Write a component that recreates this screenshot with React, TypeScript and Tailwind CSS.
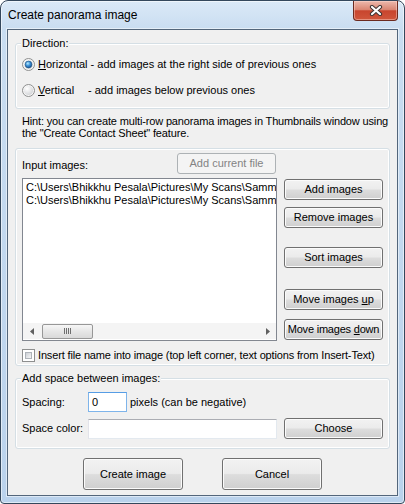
import React from "react";

const btn =
  "flex h-[21px] w-[99px] items-center justify-center rounded-[3px] border border-[#707070] bg-[linear-gradient(#f2f2f2,#ebebeb_48%,#dddddd_52%,#cfcfcf)] text-[11px] leading-none text-black shadow-[inset_0_0_0_1px_#fbfbfb] whitespace-nowrap";

const group =
  "relative mx-[7px] rounded-[3px] border border-[#d5dfe5] shadow-[inset_0_0_0_1px_#ffffff]";

function Radio({ checked }: { checked?: boolean }) {
  return (
    <svg width="13" height="13" viewBox="0 0 13 13" className="shrink-0">
      <defs>
        <radialGradient id="radioOff" cx="0.35" cy="0.3" r="0.8">
          <stop offset="0" stopColor="#ffffff" />
          <stop offset="1" stopColor="#cfd1d4" />
        </radialGradient>
        <radialGradient id="radioOn" cx="0.4" cy="0.35" r="0.7">
          <stop offset="0" stopColor="#b8ecff" />
          <stop offset="0.5" stopColor="#3a8fd6" />
          <stop offset="1" stopColor="#184f8c" />
        </radialGradient>
      </defs>
      <circle cx="6.5" cy="6.5" r="6" fill="#f6f6f6" stroke="#8e8f8f" />
      <circle cx="6.5" cy="6.5" r="4.6" fill="url(#radioOff)" />
      {checked && <circle cx="6.5" cy="6.5" r="3.4" fill="url(#radioOn)" stroke="#1d4f80" strokeWidth="0.6" />}
    </svg>
  );
}

function Checkbox() {
  return (
    <div className="h-[13px] w-[13px] shrink-0 border border-[#8e8f8f] bg-white p-[2px]">
      <div className="h-full w-full border border-[#aeb3b9] bg-[linear-gradient(135deg,#cbcfd5,#f6f6f6)]" />
    </div>
  );
}

function Arrow({ right }: { right?: boolean }) {
  return (
    <div className="flex h-[15px] w-[17px] items-center justify-center">
      <svg width="4" height="7" viewBox="0 0 4 7">
        {right ? <path d="M0 0 L4 3.5 L0 7 Z" fill="#606060" /> : <path d="M4 0 L0 3.5 L4 7 Z" fill="#606060" />}
      </svg>
    </div>
  );
}

export default function App() {
  const files = [
    "C:\\Users\\Bhikkhu Pesala\\Pictures\\My Scans\\Samm",
    "C:\\Users\\Bhikkhu Pesala\\Pictures\\My Scans\\Samm",
  ];

  return (
    <div className="font-['Liberation_Sans',Arial,sans-serif] text-[11px] text-black">
      <div className="flex h-[504px] w-[405px] flex-col rounded-t-[8px] rounded-b-[4px] border border-[#34475c] bg-[linear-gradient(180deg,#dbe9f7_0px,#c9ddf1_28px,#bad2ec_100%)] px-[6px] shadow-[inset_0_0_0_1px_rgba(255,255,255,0.55)]">
        {/* title bar */}
        <div className="flex h-[28px] shrink-0 items-start">
          <span className="mt-[7px] pl-[1px] text-[12px] leading-[15px] text-black">Create panorama image</span>
          <div className="ml-auto flex h-[20px] w-[45px] items-center justify-center rounded-b-[4px] border border-t-0 border-[#6b2a1f] bg-[linear-gradient(#ecb9ad,#da8673_45%,#c8452e_52%,#d0563c)] shadow-[inset_0_0_0_1px_rgba(255,220,210,0.45)]">
            <svg width="14" height="11" viewBox="0 0 14 11">
              <path d="M3 2 L11 9 M11 2 L3 9" stroke="#3e3433" strokeWidth="4.2" strokeLinecap="round" />
              <path d="M3 2 L11 9 M11 2 L3 9" stroke="#ffffff" strokeWidth="2.2" strokeLinecap="round" />
            </svg>
          </div>
        </div>

        {/* client area */}
        <div className="flex h-[467px] shrink-0 flex-col border border-[#53667b] bg-[#f0f0f0] shadow-[0_0_0_1px_rgba(255,255,255,0.5)]">
          {/* Direction */}
          <div className={`${group} mt-[13px] h-[66px] shrink-0 px-[6px] pt-[14px]`}>
            <span className="absolute left-[5px] top-[-7px] bg-[#f0f0f0] px-[1px] leading-[13px]">Direction:</span>
            <div className="flex h-[13px] items-center gap-[3px]">
              <Radio checked />
              <span className="whitespace-nowrap leading-[13px]">
                <span className="underline">H</span>orizontal - add images at the right side of previous ones
              </span>
            </div>
            <div className="mt-[13px] flex h-[13px] items-center gap-[3px]">
              <Radio />
              <span className="whitespace-nowrap leading-[13px]">
                <span className="inline-block w-[50px]">
                  <span className="underline">V</span>ertical
                </span>
                - add images below previous ones
              </span>
            </div>
          </div>

          <p className="ml-[14px] mt-[6px] whitespace-nowrap leading-[12px] tracking-[-0.15px]">
            Hint: you can create multi-row panorama images in Thumbnails window using
            <br />
            the "Create Contact Sheet" feature.
          </p>

          {/* Input images */}
          <div className={`${group} mt-[9px] h-[218px] shrink-0 px-[6px] pt-[4px]`}>
            <div className="flex">
              <div className="w-[255px]">
                <div className="flex h-[21px] items-center justify-between">
                  <span className="mt-[4px]">Input images:</span>
                  <div className="mr-[1px] flex h-[21px] w-[99px] items-center justify-center rounded-[3px] border border-[#adb2b5] bg-[#f4f4f4] text-[#838383]">
                    Add current file
                  </div>
                </div>
                <div className="mt-[4px] flex h-[163px] flex-col border border-[#828790] bg-white">
                  <div className="flex-1 overflow-hidden pl-[3px] pt-[2px]">
                    {files.map((f, i) => (
                      <div key={i} className="overflow-hidden whitespace-nowrap leading-[13px]">
                        {f}
                      </div>
                    ))}
                  </div>
                  <div className="mb-[1px] flex h-[16px] items-center bg-[#f4f4f4]">
                    <Arrow />
                    <div className="ml-[2px] flex h-[15px] w-[51px] items-center justify-center rounded-[2px] border border-[#979797] bg-[linear-gradient(#f6f6f6,#e6e6e6_50%,#d9d9d9)]">
                      <svg width="7" height="6" viewBox="0 0 7 6">
                        <path d="M0.5 0 V6 M2.5 0 V6 M4.5 0 V6 M6.5 0 V6" stroke="#6e6e6e" strokeWidth="1" />
                      </svg>
                    </div>
                    <div className="flex-1" />
                    <Arrow right />
                  </div>
                </div>
              </div>
              <div className="ml-[7px] flex flex-col pt-[26px]">
                <div className={btn}>Add images</div>
                <div className={`${btn} mt-[7px]`}>Remove images</div>
                <div className={`${btn} mt-[19px]`}>Sort images</div>
                <div className={`${btn} mt-[21px]`}>
                  <span>
                    Move images <span className="underline">u</span>p
                  </span>
                </div>
                <div className={`${btn} mt-[9px] tracking-[-0.2px]`}>
                  <span>
                    Move images <span className="underline">d</span>own
                  </span>
                </div>
              </div>
            </div>
            <div className="mt-[8px] flex h-[13px] items-center gap-[3px]">
              <Checkbox />
              <span className="whitespace-nowrap leading-[13px] tracking-[-0.15px]">
                Insert file name into image (top left corner, text options from Insert-Text)
              </span>
            </div>
          </div>

          {/* Add space */}
          <div className={`${group} mt-[12px] h-[71px] shrink-0 px-[6px] pt-[13px]`}>
            <span className="absolute left-[5px] top-[-7px] bg-[#f0f0f0] px-[1px] leading-[13px]">
              Add space between images:
            </span>
            <div className="flex h-[20px] items-center">
              <span className="w-[66px]">Spacing:</span>
              <div className="flex h-[20px] w-[39px] items-center border border-[#7eb4ea] border-t-[#569de5] bg-white pl-[3px]">
                0
              </div>
              <span className="ml-[3px]">pixels (can be negative)</span>
            </div>
            <div className="mt-[6px] flex h-[21px] items-center">
              <span className="w-[66px]">Space color:</span>
              <div className="h-[20px] w-[189px] border border-[#e3e9ef] border-l-[#e2e3ea] border-t-[#abadb3] bg-white" />
              <div className={`${btn} ml-[7px]`}>Choose</div>
            </div>
          </div>

          <div className="mt-[9px] flex justify-center gap-[39px]">
            <div className={`${btn} h-[32px] w-[100px]`}>Create image</div>
            <div className={`${btn} h-[32px] w-[100px]`}>Cancel</div>
          </div>
        </div>
      </div>
    </div>
  );
}
